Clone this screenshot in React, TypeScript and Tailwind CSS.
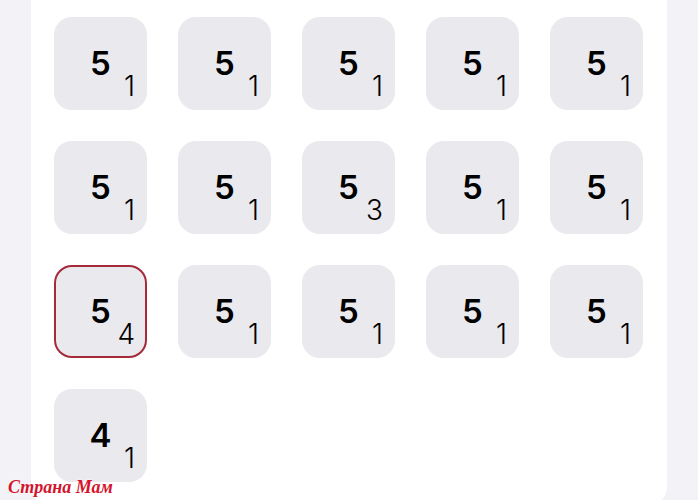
import React from "react";

const tiles: { main: number; sub: number; selected?: boolean }[] = [
  { main: 5, sub: 1 }, { main: 5, sub: 1 }, { main: 5, sub: 1 }, { main: 5, sub: 1 }, { main: 5, sub: 1 },
  { main: 5, sub: 1 }, { main: 5, sub: 1 }, { main: 5, sub: 3 }, { main: 5, sub: 1 }, { main: 5, sub: 1 },
  { main: 5, sub: 4, selected: true }, { main: 5, sub: 1 }, { main: 5, sub: 1 }, { main: 5, sub: 1 }, { main: 5, sub: 1 },
  { main: 4, sub: 1 },
];

export default function App() {
  return (
    <div className="relative h-[500px] w-[698px] overflow-hidden bg-[#f2f2f7]" style={{ fontFamily: "Inter, 'Noto Sans', sans-serif" }}>
      <div className="ml-[31px] h-[504px] w-[636px] rounded-b-[16px] bg-white pl-[23px] pt-[17px]">
        <div className="grid grid-cols-[repeat(5,93px)] gap-[31px]">
          {tiles.map((t, i) => (
            <div
              key={i}
              className={
                t.selected
                  ? "relative flex h-[93px] w-[93px] items-center justify-center rounded-[18px] border-2 border-[#a52a3a] bg-[#e9e9ee]"
                  : "relative flex h-[93px] w-[93px] items-center justify-center rounded-[18px] bg-[#e9e9ee]"
              }
            >
              <span className="text-[33px] font-semibold leading-none text-black">{t.main}</span>
              <span
                className={
                  t.selected
                    ? "absolute right-[10px] top-[53px] text-right text-[28px] font-light leading-none text-black"
                    : "absolute right-[12px] top-[55px] text-right text-[28px] font-light leading-none text-black"
                }
              >
                {t.sub}
              </span>
            </div>
          ))}
        </div>
      </div>
      <div
        className="absolute left-[8px] top-[474px] text-[18px] italic font-bold text-[#d4142c]"
        style={{ fontFamily: "'Liberation Serif', serif", textShadow: "0 0 2px #fff, 0 0 2px #fff" }}
      >
        Страна Мам
      </div>
    </div>
  );
}
